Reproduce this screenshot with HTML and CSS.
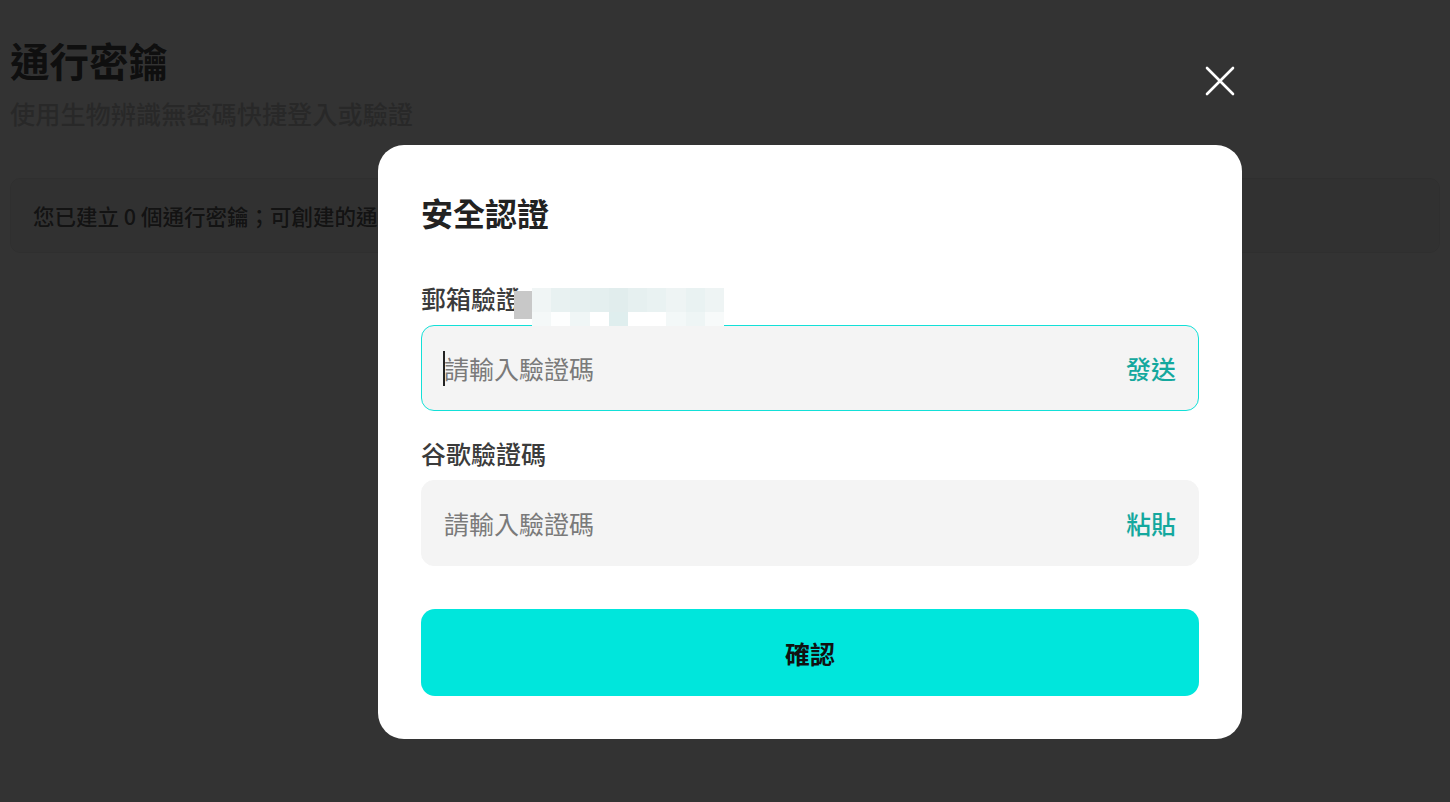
FILE: index.html
```html
<!DOCTYPE html>
<html lang="zh-Hant">
<head>
<meta charset="utf-8">
<title>通行密鑰</title>
<link rel="stylesheet" href="styles.css">
</head>
<body>
<main class="page">
  <h1 class="page-title">通行密鑰</h1>
  <p class="page-sub">使用生物辨識無密碼快捷登入或驗證</p>
  <div class="info-card">您已建立 0 個通行密鑰；可創建的通行密鑰數量上限為 10 個</div>
</main>

<div class="overlay">
  <section class="modal">
    <button class="close" aria-label="關閉">
      <svg width="30" height="30" viewBox="0 0 30 30"><path d="M2 2 L28 28 M28 2 L2 28" stroke="#fff" stroke-width="2.6" stroke-linecap="round" fill="none"/></svg>
    </button>
    <h2 class="modal-title">安全認證</h2>

    <div class="field">
      <label class="label">郵箱驗證<span class="masked">
        <i class="m-grey"></i>
        <span class="m-grid">
          <i style="background:#f0f5f5"></i><i style="background:#e8f1f1"></i><i style="background:#e6f0f0"></i><i style="background:#e4efef"></i><i style="background:#e1eded"></i><i style="background:#e6f0f0"></i><i style="background:#e9f2f2"></i><i style="background:#eef4f4"></i><i style="background:#e9f2f2"></i><i style="background:#eef4f4"></i>
          <i style="background:#f4f8f8"></i><i style="background:#fdfefe"></i><i style="background:#f0f6f6"></i><i style="background:#ffffff"></i><i style="background:#dfeeee"></i><i style="background:#ffffff"></i><i style="background:#ffffff"></i><i style="background:#f3f8f8"></i><i style="background:#eef5f5"></i><i style="background:#f7fafa"></i>
        </span>
      </span></label>
      <div class="input-box active">
        <span class="caret"></span>
        <input class="input" type="text" placeholder="請輸入驗證碼">
        <button class="action">發送</button>
      </div>
    </div>

    <div class="field">
      <label class="label">谷歌驗證碼</label>
      <div class="input-box">
        <input class="input" type="text" placeholder="請輸入驗證碼">
        <button class="action">粘貼</button>
      </div>
    </div>

    <button class="confirm">確認</button>
  </section>
</div>
</body>
</html>
```

FILE: styles.css
```css
* { box-sizing: border-box; }

html, body {
  margin: 0;
  padding: 0;
  height: 100%;
}

body {
  background: #ffffff;
  font-family: "Noto Sans CJK TC", "Noto Sans", sans-serif;
  overflow: hidden;
}

.page {
  padding: 30px 10px 0 10px;
}

.page-title {
  margin: 0;
  font-size: 39.5px;
  line-height: 60px;
  font-weight: 700;
  color: #4a4a4a;
}

.page-sub {
  margin: 0;
  font-size: 25.2px;
  line-height: 46px;
  font-weight: 500;
  color: #c8c8c8;
}

.info-card {
  margin-top: 42px;
  height: 75px;
  border: 1px solid #e9e9e9;
  background: #f6f6f6;
  border-radius: 10px;
  padding: 0 22px;
  display: flex;
  align-items: center;
  white-space: nowrap;
  font-size: 21.5px;
  font-weight: 500;
  color: #5e5e5e;
}

.overlay {
  position: fixed;
  inset: 0;
  background: rgba(0, 0, 0, 0.8);
  padding: 145px 0 0 378px;
}

.modal {
  position: relative;
  width: 864px;
  background: #fff;
  border-radius: 26px;
  padding: 43px;
  display: flex;
  flex-direction: column;
}

.close {
  position: absolute;
  top: -79px;
  right: 7px;
  width: 30px;
  height: 30px;
  padding: 0;
  border: 0;
  background: none;
  cursor: pointer;
}
.close svg { display: block; }

.modal-title {
  margin: 0;
  font-size: 32px;
  line-height: 48px;
  font-weight: 700;
  color: #222;
}

.field {
  display: flex;
  flex-direction: column;
  gap: 10px;
  margin-top: 25px;
}
.modal-title + .field { margin-top: 45px; }

.label {
  position: relative;
  font-size: 25px;
  line-height: 34px;
  font-weight: 500;
  color: #3b3b3b;
}

.masked {
  position: absolute;
  left: 93px;
  top: 7px;
  display: flex;
  align-items: flex-start;
  z-index: 2;
}
.m-grey {
  display: block;
  width: 18px;
  height: 28px;
  margin-top: 3px;
  background: #c8c8c8;
}
.m-grid {
  display: grid;
  grid-template-columns: repeat(10, 19.2px);
  grid-template-rows: 24px 14px;
}
.m-grid i { display: block; }

.input-box {
  position: relative;
  display: flex;
  align-items: center;
  height: 86px;
  background: #f4f4f4;
  border: 1px solid #f4f4f4;
  border-radius: 13px;
  padding: 0 22px;
}
.input-box.active {
  border-color: #12e0d8;
}

.caret {
  position: absolute;
  left: 21px;
  top: 25px;
  width: 2px;
  height: 35px;
  background: #222;
}

.input {
  flex: 1;
  min-width: 0;
  border: 0;
  outline: none;
  background: transparent;
  font-family: inherit;
  font-size: 25px;
  color: #333;
  padding: 0;
}
.input::placeholder {
  color: #7a7a7a;
  opacity: 1;
}

.action {
  border: 0;
  background: none;
  padding: 0;
  font-family: inherit;
  font-size: 25px;
  font-weight: 500;
  color: #14a89e;
  cursor: pointer;
}

.confirm {
  margin-top: 43px;
  height: 87px;
  border: 0;
  border-radius: 14px;
  background: #00e6dc;
  font-family: inherit;
  font-size: 25px;
  font-weight: 700;
  color: #111;
  cursor: pointer;
}
```
